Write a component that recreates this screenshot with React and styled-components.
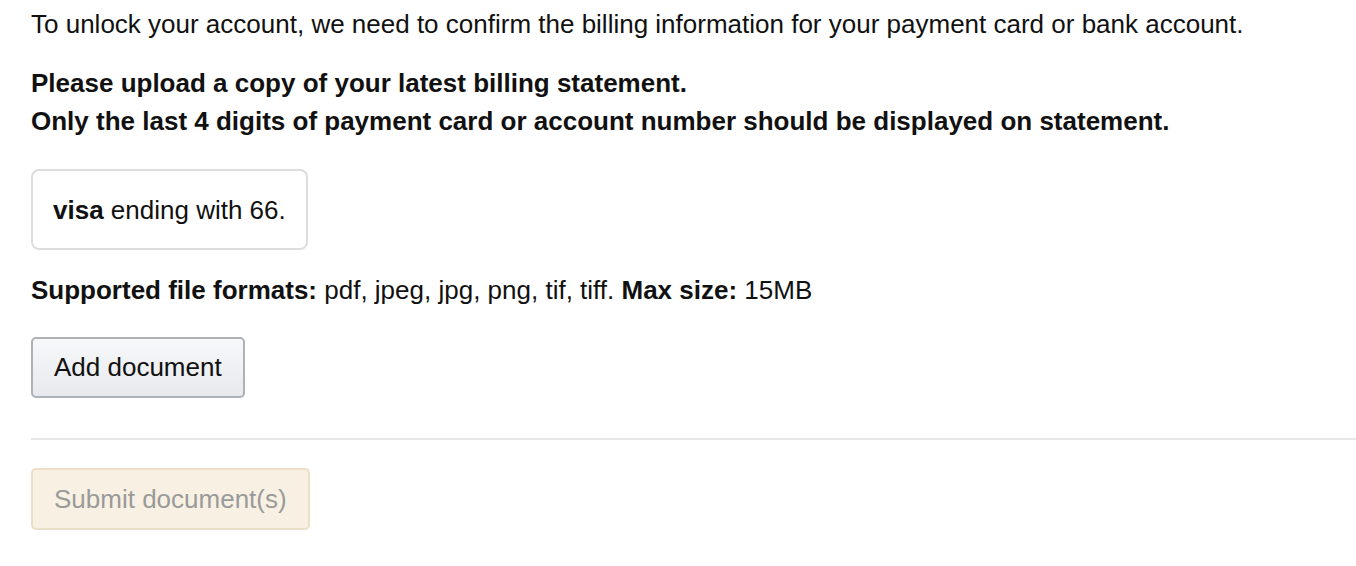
import React from "react";
import styled, { createGlobalStyle } from "styled-components";

const Global = createGlobalStyle`
  html, body { margin: 0; padding: 0; background: #fff; }
  body { font-family: "Liberation Sans", Arial, sans-serif; color: #111; }
`;

const Page = styled.div`
  padding: 5px 0 0 31px;
  font-size: 26px;
  line-height: 38px;
`;

const Intro = styled.p`
  margin: 0 0 21px;
`;

const Notice = styled.p`
  margin: 0 0 29px;
  font-weight: bold;
`;

const CardBox = styled.div`
  display: inline-flex;
  align-items: center;
  height: 81px;
  box-sizing: border-box;
  padding: 0 20px;
  border: 2px solid #ddd;
  border-radius: 8px;
`;

const Formats = styled.p`
  margin: 21px 0 28px;
`;

const Button = styled.button`
  display: block;
  box-sizing: border-box;
  font-family: inherit;
  font-size: 26px;
  border-radius: 5px;
  padding: 0 21px;
  height: ${(p) => p.$h}px;
  cursor: pointer;
  border: 2px solid ${(p) => (p.$disabled ? "#ebdfc8" : "#adb1b8")};
  background: ${(p) =>
    p.$disabled ? "#f8f1e3" : "linear-gradient(#f7f8fa, #e7e9ec)"};
  color: ${(p) => (p.$disabled ? "#9a9a9a" : "#111")};
`;

const Divider = styled.hr`
  margin: 40px 0 28px;
  border: 0;
  border-top: 2px solid #e7e7e7;
`;

export default function App() {
  return (
    <>
      <Global />
      <Page>
        <Intro>
          To unlock your account, we need to confirm the billing information for your payment card or bank account.
        </Intro>
        <Notice>
          Please upload a copy of your latest billing statement.
          <br />
          Only the last 4 digits of payment card or account number should be displayed on statement.
        </Notice>
        <CardBox>
          <span>
            <b>visa</b> ending with 66.
          </span>
        </CardBox>
        <Formats>
          <b>Supported file formats:</b> pdf, jpeg, jpg, png, tif, tiff. <b>Max size:</b> 15MB
        </Formats>
        <Button $h={61}>Add document</Button>
        <Divider />
        <Button $h={62} $disabled disabled>
          Submit document(s)
        </Button>
      </Page>
    </>
  );
}
